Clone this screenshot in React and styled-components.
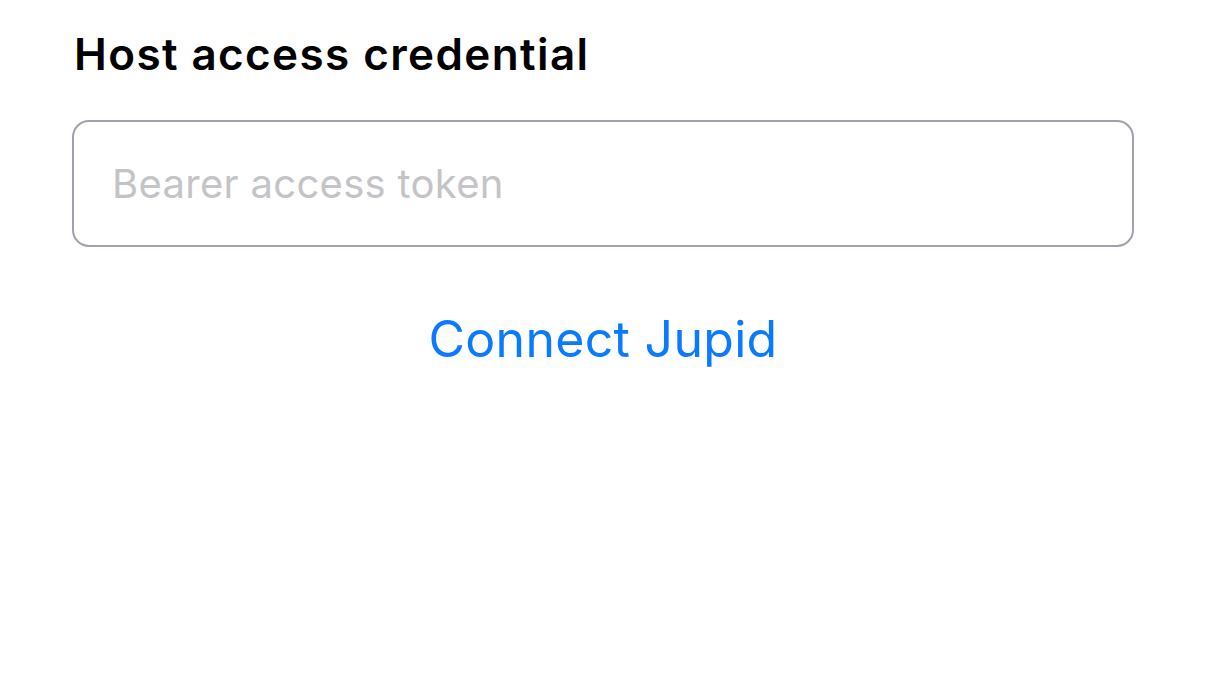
import React from "react";
import styled, { createGlobalStyle } from "styled-components";

const GlobalStyle = createGlobalStyle`
  html, body {
    margin: 0;
    padding: 0;
    background: #ffffff;
  }
  body {
    font-family: Inter, "Liberation Sans", sans-serif;
    -webkit-font-smoothing: antialiased;
  }
`;

const Page = styled.div`
  display: flex;
  flex-direction: column;
  padding: 28px 72px 0 72px;
  height: 700px;
  box-sizing: border-box;
`;

const Label = styled.h2`
  margin: 0 0 0 2px;
  font-size: 44px;
  font-weight: 600;
  line-height: 52px;
  color: #000000;
  letter-spacing: 1.4px;
`;

const TokenInput = styled.input`
  margin-top: 40px;
  height: 127px;
  box-sizing: border-box;
  border: 2px solid #9fa1ad;
  border-radius: 17px;
  padding: 0 38px;
  font-family: inherit;
  font-size: 40px;
  letter-spacing: 0.3px;
  color: #000;
  outline: none;
  background: #fff;

  &::placeholder {
    color: #c4c4c7;
  }
`;

const LinkButton = styled.button`
  align-self: center;
  margin-top: 62px;
  background: none;
  border: none;
  padding: 0;
  font-family: inherit;
  font-size: 50px;
  font-weight: 400;
  letter-spacing: 0.3px;
  color: #0a7aff;
  cursor: pointer;
  line-height: 60px;
`;

export default function App() {
  return (
    <>
      <GlobalStyle />
      <Page>
        <Label>Host access credential</Label>
        <TokenInput placeholder="Bearer access token" />
        <LinkButton>Connect Jupid</LinkButton>
      </Page>
    </>
  );
}
